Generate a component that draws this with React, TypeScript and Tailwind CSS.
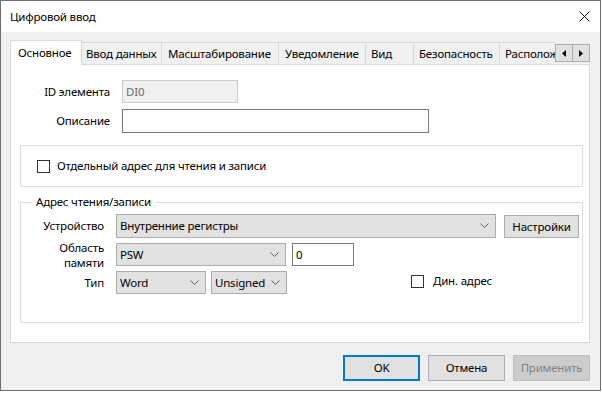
import React from "react";

const Chevron = () => (
  <svg width="9" height="6" viewBox="0 0 9 6" className="shrink-0">
    <path d="M0.5 0.5 L4.5 4.5 L8.5 0.5" fill="none" stroke="#606060" strokeWidth="1" />
  </svg>
);

const Select = ({ text, w }: { text: string; w: string }) => (
  <div className={`${w} h-[23px] shrink-0 flex items-center justify-between bg-[#e1e1e1] border border-[#adadad] pl-[3px] pr-[6px]`}>
    <span>{text}</span>
    <Chevron />
  </div>
);

const Check = () => <div className="w-[13px] h-[13px] shrink-0 border border-[#333333] bg-white" />;

export default function App() {
  const inactive = [
    { t: "Ввод данных", w: "w-[80px]", pl: "pl-[4px]" },
    { t: "Масштабирование", w: "w-[117px]", pl: "pl-[6px]" },
    { t: "Уведомление", w: "w-[87px]", pl: "pl-[6px]" },
    { t: "Вид", w: "w-[48px]", pl: "pl-[5px]" },
    { t: "Безопасность", w: "w-[86px]", pl: "pl-[5px]" },
    { t: "Расположение", w: "w-[80px]", pl: "pl-[5px]" },
  ];
  return (
    <div
      className="w-[602px] h-[393px] bg-white overflow-hidden text-[11.5px] tracking-[-0.2px] leading-[16px] text-black"
      style={{ fontFamily: '"Noto Sans", "Open Sans", sans-serif' }}
    >
      <div className="w-[601px] h-[391px] border border-[#6f6f6f] flex flex-col">
        {/* title bar */}
        <div className="h-[31px] shrink-0 bg-white flex items-center justify-between pl-[9px] pr-[10px]">
          <span>Цифровой ввод</span>
          <svg width="11" height="11" viewBox="0 0 11 11">
            <path d="M0.5 0.5 L10.5 10.5 M10.5 0.5 L0.5 10.5" stroke="#111" strokeWidth="1" />
          </svg>
        </div>
        {/* body */}
        <div className="flex-1 bg-[#f0f0f0] flex flex-col pt-[8px] pl-[9px] pr-[9px]">
          {/* tab strip */}
          <div className="flex h-[25px] -mb-px relative z-10">
            <div className="w-[545px] h-[25px] overflow-hidden flex items-start">
              <div className="w-[72px] h-[25px] shrink-0 bg-white border-l border-t border-r border-[#d9d9d9] flex items-center pl-[7px]">
                Основное
              </div>
              {inactive.map((tab) => (
                <div
                  key={tab.t}
                  className={`${tab.w} ${tab.pl} h-[22px] mt-[2px] shrink-0 border-t border-r border-[#d9d9d9] flex items-center whitespace-nowrap overflow-hidden`}
                >
                  {tab.t}
                </div>
              ))}
            </div>
            <div className="flex mt-[4px] h-[18px]">
              <div className="w-[18px] h-[18px] border border-[#adadad] bg-[#e1e1e1] flex items-center justify-center">
                <svg width="4" height="7" viewBox="0 0 4 7"><path d="M4 0 L0 3.5 L4 7 Z" fill="#000" /></svg>
              </div>
              <div className="w-[18px] h-[18px] -ml-px border border-[#adadad] bg-[#e1e1e1] flex items-center justify-center">
                <svg width="4" height="7" viewBox="0 0 4 7"><path d="M0 0 L4 3.5 L0 7 Z" fill="#000" /></svg>
              </div>
            </div>
          </div>
          {/* panel */}
          <div className="w-[580px] h-[279px] shrink-0 bg-white border border-[#d9d9d9] flex flex-col">
            <div className="mt-[15px] flex items-center h-[23px]">
              <div className="w-[99px] text-right">ID элемента</div>
              <div className="ml-[12px] w-[116px] h-[23px] bg-[#f0f0f0] border border-[#cccccc] flex items-center pl-[3px] text-[#6d6d6d]">
                DI0
              </div>
            </div>
            <div className="mt-[6px] flex items-center h-[24px]">
              <div className="w-[99px] text-right">Описание</div>
              <div className="ml-[12px] w-[307px] h-[24px] bg-white border border-[#7a7a7a]" />
            </div>
            <div className="mt-[12px] ml-[9px] w-[563px] h-[42px] shrink-0 border border-[#dcdcdc] flex items-center pl-[16px]">
              <Check />
              <span className="ml-[7px]">Отдельный адрес для чтения и записи</span>
            </div>
            <fieldset className="mt-[7px] ml-[9px] w-[563px] h-[129px] shrink-0 border border-[#dcdcdc] pl-[11px]">
              <legend className="px-[4px] leading-[16px]">Адрес чтения/записи</legend>
              <div className="mt-[4px] flex items-center h-[24px]">
                <div className="w-[72px] text-right">Устройство</div>
                <div className="ml-[12px] w-[380px] h-[24px] flex items-center justify-between bg-[#e1e1e1] border border-[#adadad] pl-[3px] pr-[6px]">
                  <span>Внутренние регистры</span>
                  <Chevron />
                </div>
                <div className="ml-[8px] w-[75px] h-[23px] mt-px bg-[#e1e1e1] border border-[#adadad] flex items-center justify-center">
                  Настройки
                </div>
              </div>
              <div className="mt-[1px] flex items-center h-[31px]">
                <div className="w-[72px] text-right leading-[15px] flex flex-col items-end">
                  <span>Область</span>
                  <span>памяти</span>
                </div>
                <div className="ml-[12px]">
                  <Select text="PSW" w="w-[170px]" />
                </div>
                <div className="ml-[6px] w-[62px] h-[23px] bg-white border border-[#7a7a7a] flex items-center pl-[3px]">
                  0
                </div>
              </div>
              <div className="mt-[1px] flex items-center h-[23px]">
                <div className="w-[72px] text-right">Тип</div>
                <div className="ml-[12px]">
                  <Select text="Word" w="w-[90px]" />
                </div>
                <div className="ml-[5px]">
                  <Select text="Unsigned" w="w-[76px]" />
                </div>
                <div className="ml-[124px] flex items-center -mt-[3px]">
                  <Check />
                  <span className="ml-[9px]">Дин. адрес</span>
                </div>
              </div>
            </fieldset>
          </div>
          {/* buttons */}
          <div className="mt-[12px] flex justify-end gap-[8px] pr-[1px]">
            <div className="w-[77px] h-[26px] bg-[#e1e1e1] border-2 border-[#0078d7] flex items-center justify-center">
              OK
            </div>
            <div className="w-[77px] h-[26px] bg-[#e1e1e1] border border-[#adadad] flex items-center justify-center">
              Отмена
            </div>
            <div className="w-[77px] h-[26px] bg-[#cccccc] border border-[#bfbfbf] flex items-center justify-center text-[#838383]">
              Применить
            </div>
          </div>
        </div>
      </div>
    </div>
  );
}
